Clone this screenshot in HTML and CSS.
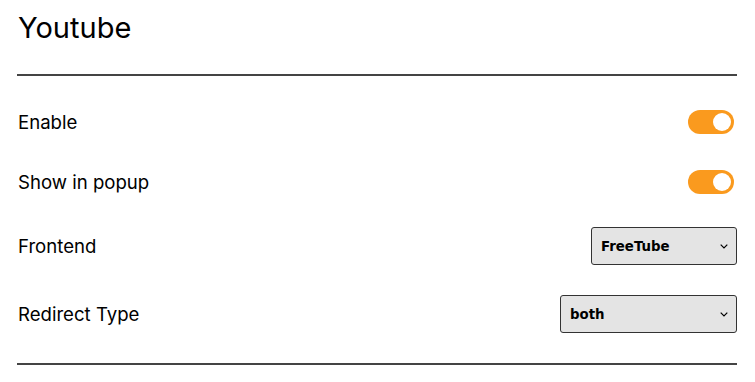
FILE: index.html
```html
<!DOCTYPE html>
<html>
<head>
  <title>Youtube</title>
  <link rel="stylesheet" href="styles.css">
</head>

<body>
  <section class="service">
    <h1 class="service-title">Youtube</h1>
    <hr>
    <div class="block">
      <span class="label">Enable</span>
      <input type="checkbox" class="switch" checked>
    </div>
    <div class="block">
      <span class="label">Show in popup</span>
      <input type="checkbox" class="switch" checked>
    </div>
    <div class="block block-select">
      <span class="label">Frontend</span>
      <select class="frontend">
        <option>FreeTube</option>
        <option>Invidious</option>
        <option>Piped</option>
      </select>
    </div>
    <div class="block block-select">
      <span class="label">Redirect Type</span>
      <select class="redirect-type">
        <option>both</option>
        <option>only embedded</option>
        <option>only not embedded</option>
      </select>
    </div>
    <hr>
  </section>
</body>
</html>
```

FILE: styles.css
```css
body {
  margin: 0;
  padding: 0 18px 0 17px;
  background: #fff;
  color: #000;
  font-family: Inter, "Noto Sans", sans-serif;
}

.service-title {
  margin: 10px 0 0 1px;
  font-size: 29px;
  font-weight: 400;
  line-height: 36px;
}

hr {
  height: 2px;
  margin: 28px 0 0;
  border: none;
  background-color: #444;
}

.block {
  display: flex;
  justify-content: space-between;
  align-items: center;
  height: 24px;
  margin-top: 34px;
  padding-left: 1px;
}

.block + .block {
  margin-top: 36px;
}

.block + .block-select {
  margin-top: 33px;
}

.block-select {
  height: 38px;
}

.block-select + .block-select {
  margin-top: 30px;
}

.block + hr {
  margin-top: 30px;
}

.label {
  font-size: 18.6px;
}

.switch {
  appearance: none;
  position: relative;
  width: 46px;
  height: 24px;
  margin: 0 3px 0 0;
  border-radius: 12px;
  background-color: #fa9a1e;
  cursor: pointer;
}

.switch::after {
  content: "";
  position: absolute;
  top: 3px;
  right: 3px;
  width: 18px;
  height: 18px;
  border-radius: 50%;
  background-color: #fff;
}

select {
  appearance: none;
  height: 38px;
  padding: 0 26px 0 9px;
  border: 1px solid #333;
  border-radius: 3px;
  background-color: #e4e4e4;
  background-image: url("data:image/svg+xml;utf8,<svg xmlns='http://www.w3.org/2000/svg' width='8' height='5' viewBox='0 0 8 5'><path d='M0.7 0.7 L4 4 L7.3 0.7' fill='none' stroke='black' stroke-width='1.2'/></svg>");
  background-repeat: no-repeat;
  background-position: right 8px center;
  color: #000;
  font-family: "DejaVu Sans", sans-serif;
  font-size: 13.333px;
  font-weight: bold;
}

.frontend {
  width: 146px;
}

.redirect-type {
  width: 177px;
}
```
